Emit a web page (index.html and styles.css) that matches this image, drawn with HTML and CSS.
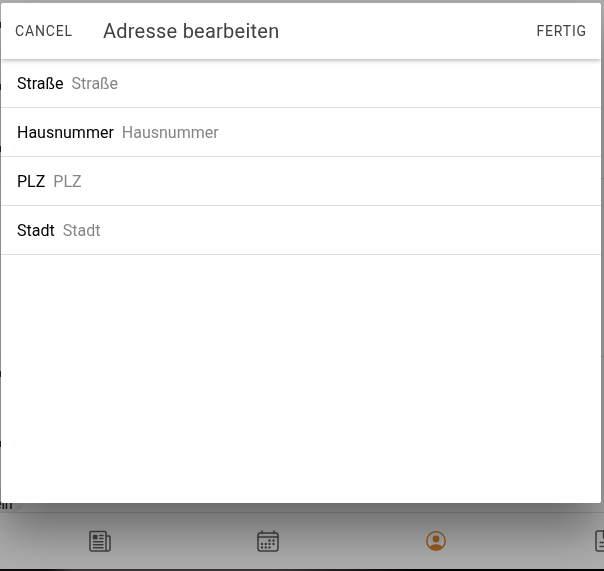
FILE: index.html
```
<!DOCTYPE html>
<html lang="de">
<head>
  <meta charset="UTF-8" />
  <meta name="viewport" content="width=device-width, initial-scale=1.0"/>
  <title>Adresse bearbeiten</title>
  <link rel="stylesheet" href="styles.css">
</head>
<body>

<div class="app">
  <main class="page">
    <section class="page-section">
      <span class="marker brown"></span>
      <span class="marker blue"></span>
      <span class="marker blue"></span>
    </section>
    <section class="page-section"></section>
    <section class="page-section last">
      <span class="marker brown"></span>
      <span class="marker blue"></span>
      <span class="chip">ein</span>
    </section>
  </main>

  <nav class="tab-bar">
    <a class="tab" href="#news" aria-label="News">
      <svg viewBox="0 0 24 24">
        <path d="M20 22H4a2 2 0 0 1-2-2V3.500a1 1 0 0 1 1-1h14a1 1 0 0 1 1 1V20a2 2 0 0 0 4 0V8a1 1 0 0 0-1-1h-3"/>
        <path d="M11.500 6.500h3.500M11.500 9.500h3.500M5.500 12.700h9.500M5.500 15.700h9.500M5.500 18.700h9.500"/>
        <rect class="solid" x="4.800" y="5.700" width="4.700" height="4.700" rx="1"/>
      </svg>
    </a>
    <a class="tab" href="#termine" aria-label="Termine">
      <svg viewBox="0 0 24 24">
        <rect x="2" y="4" width="20" height="18" rx="2.500"/>
        <path d="M6 2v2M18 2v2M2 8h20"/>
        <g class="solid">
          <circle cx="13.500" cy="11.500" r="1.200"/><circle cx="17.500" cy="11.500" r="1.200"/>
          <circle cx="6" cy="15" r="1.200"/><circle cx="9.800" cy="15" r="1.200"/><circle cx="13.500" cy="15" r="1.200"/><circle cx="17.500" cy="15" r="1.200"/>
          <circle cx="6" cy="18.500" r="1.200"/><circle cx="9.800" cy="18.500" r="1.200"/><circle cx="13.500" cy="18.500" r="1.200"/>
        </g>
      </svg>
    </a>
    <a class="tab selected" href="#profil" aria-label="Profil">
      <svg viewBox="0 0 24 24">
        <circle cx="12" cy="12" r="9.200"/>
        <circle class="solid" cx="12" cy="10" r="3.400"/>
        <path class="solid" d="M5.300 18.500C6.700 16.300 9.200 15.200 12 15.200s5.300 1.100 6.700 3.300C17 20.200 14.700 21.300 12 21.300s-5-1.100-6.700-2.800z"/>
      </svg>
    </a>
    <a class="tab" href="#dokumente" aria-label="Dokumente">
      <svg viewBox="0 0 24 24">
        <path d="M20 10v10a2 2 0 0 1-2 2H6a2 2 0 0 1-2-2V4a2 2 0 0 1 2-2h6z"/>
        <path d="M11.500 2v6a2 2 0 0 0 2 2H20M8 13.500h8M8 17.500h8"/>
      </svg>
    </a>
  </nav>
</div>

<div class="backdrop">
  <form class="modal" role="dialog" aria-labelledby="modalTitle">
    <header class="toolbar">
      <button type="button" class="toolbar-btn">CANCEL</button>
      <h1 id="modalTitle">Adresse bearbeiten</h1>
      <button type="submit" class="toolbar-btn">FERTIG</button>
    </header>

    <div class="item">
      <label for="street">Straße</label>
      <input type="text" id="street" placeholder="Straße">
    </div>
    <div class="item">
      <label for="number">Hausnummer</label>
      <input type="text" id="number" placeholder="Hausnummer">
    </div>
    <div class="item">
      <label for="zip">PLZ</label>
      <input type="text" id="zip" placeholder="PLZ">
    </div>
    <div class="item">
      <label for="city">Stadt</label>
      <input type="text" id="city" placeholder="Stadt">
    </div>
  </form>
</div>

</body>
</html>
```
FILE: styles.css
```
:root {
  --text: #424242;
  --border: #dedede;
  --primary: #e28a2c;
}

* { box-sizing: border-box; }

body {
  margin: 0;
  font-family: Roboto, sans-serif;
  background: linear-gradient(90deg, #140e10 8%, #5a4a50 12%, #5a4a50 45%, #000 70%);
  color: #000;
}

/* Page behind the modal */
.app {
  display: flex;
  flex-direction: column;
  height: 100vh;
  padding-bottom: 2px;
  overflow: hidden;
}

.page {
  flex: 1;
  display: flex;
  flex-direction: column;
  min-height: 0;
  padding-top: 1px;
  overflow: hidden;
  background: #fff;
}

.page-section {
  display: flex;
  flex-direction: column;
  gap: 56px;
  height: 178px;
  padding-top: 21px;
  flex-shrink: 0;
  border-bottom: 1px solid var(--border);
}

.page-section.last {
  flex: 1;
  gap: 0;
  height: auto;
  padding-top: 14px;
  border-bottom: none;
}

.marker {
  width: 1px;
  height: 6px;
}

.marker.brown { background: #6b2a10; }
.marker.blue { background: #1b3f78; }

.last .marker.blue { margin-top: 64px; }

.chip {
  align-self: flex-start;
  height: 24px;
  margin-top: auto;
  margin-left: -18px;
  padding: 0 12px;
  border-radius: 0 12px 12px 0;
  background: #ebebeb;
  font-size: 14px;
  line-height: 32px;
}

.tab-bar {
  display: flex;
  height: 57px;
  padding-left: 16px;
  background: #fff;
  border-top: 1px solid var(--border);
}

.tab {
  flex: 0 0 168px;
  display: flex;
  align-items: center;
  justify-content: center;
  color: #5f5f5f;
}

.tab.selected {
  color: var(--primary);
}

.tab svg {
  width: 24px;
  height: 24px;
  fill: none;
  stroke: currentColor;
  stroke-width: 1.500;
  stroke-linecap: round;
  stroke-linejoin: round;
}

.tab .solid {
  fill: currentColor;
  stroke: none;
}

/* Modal */
.backdrop {
  position: fixed;
  inset: 0;
  padding: 3px 3px 0 1px;
  background: rgba(0, 0, 0, 0.32);
}

.modal {
  width: 100%;
  max-width: 600px;
  height: 500px;
  max-height: 100%;
  margin: 0 auto;
  overflow: hidden;
  border-radius: 2px;
  background: #fff;
  box-shadow: 0 28px 48px rgba(0, 0, 0, 0.4);
}

.toolbar {
  display: flex;
  align-items: center;
  height: 56px;
  padding: 0 6px;
  color: var(--text);
  box-shadow: 0 2px 4px -1px rgba(0, 0, 0, 0.2), 0 2px 5px rgba(0, 0, 0, 0.12);
}

.toolbar h1 {
  flex: 1;
  margin: 0;
  padding: 0 22px;
  font-size: 20px;
  font-weight: 400;
  letter-spacing: 0.0125em;
}

.toolbar-btn {
  height: 32px;
  padding: 0 8px;
  border: none;
  background: none;
  color: inherit;
  font-family: inherit;
  font-size: 14px;
  letter-spacing: 0.06em;
  cursor: pointer;
}

.item {
  display: flex;
  align-items: center;
  gap: 8px;
  height: 49px;
  padding: 0 16px;
  border-bottom: 1px solid var(--border);
  font-size: 16px;
}

.item input {
  flex: 1;
  min-width: 0;
  height: 40px;
  padding: 0;
  border: none;
  outline: none;
  background: none;
  color: inherit;
  font: inherit;
}

.item input::placeholder {
  color: #858585;
}
```
